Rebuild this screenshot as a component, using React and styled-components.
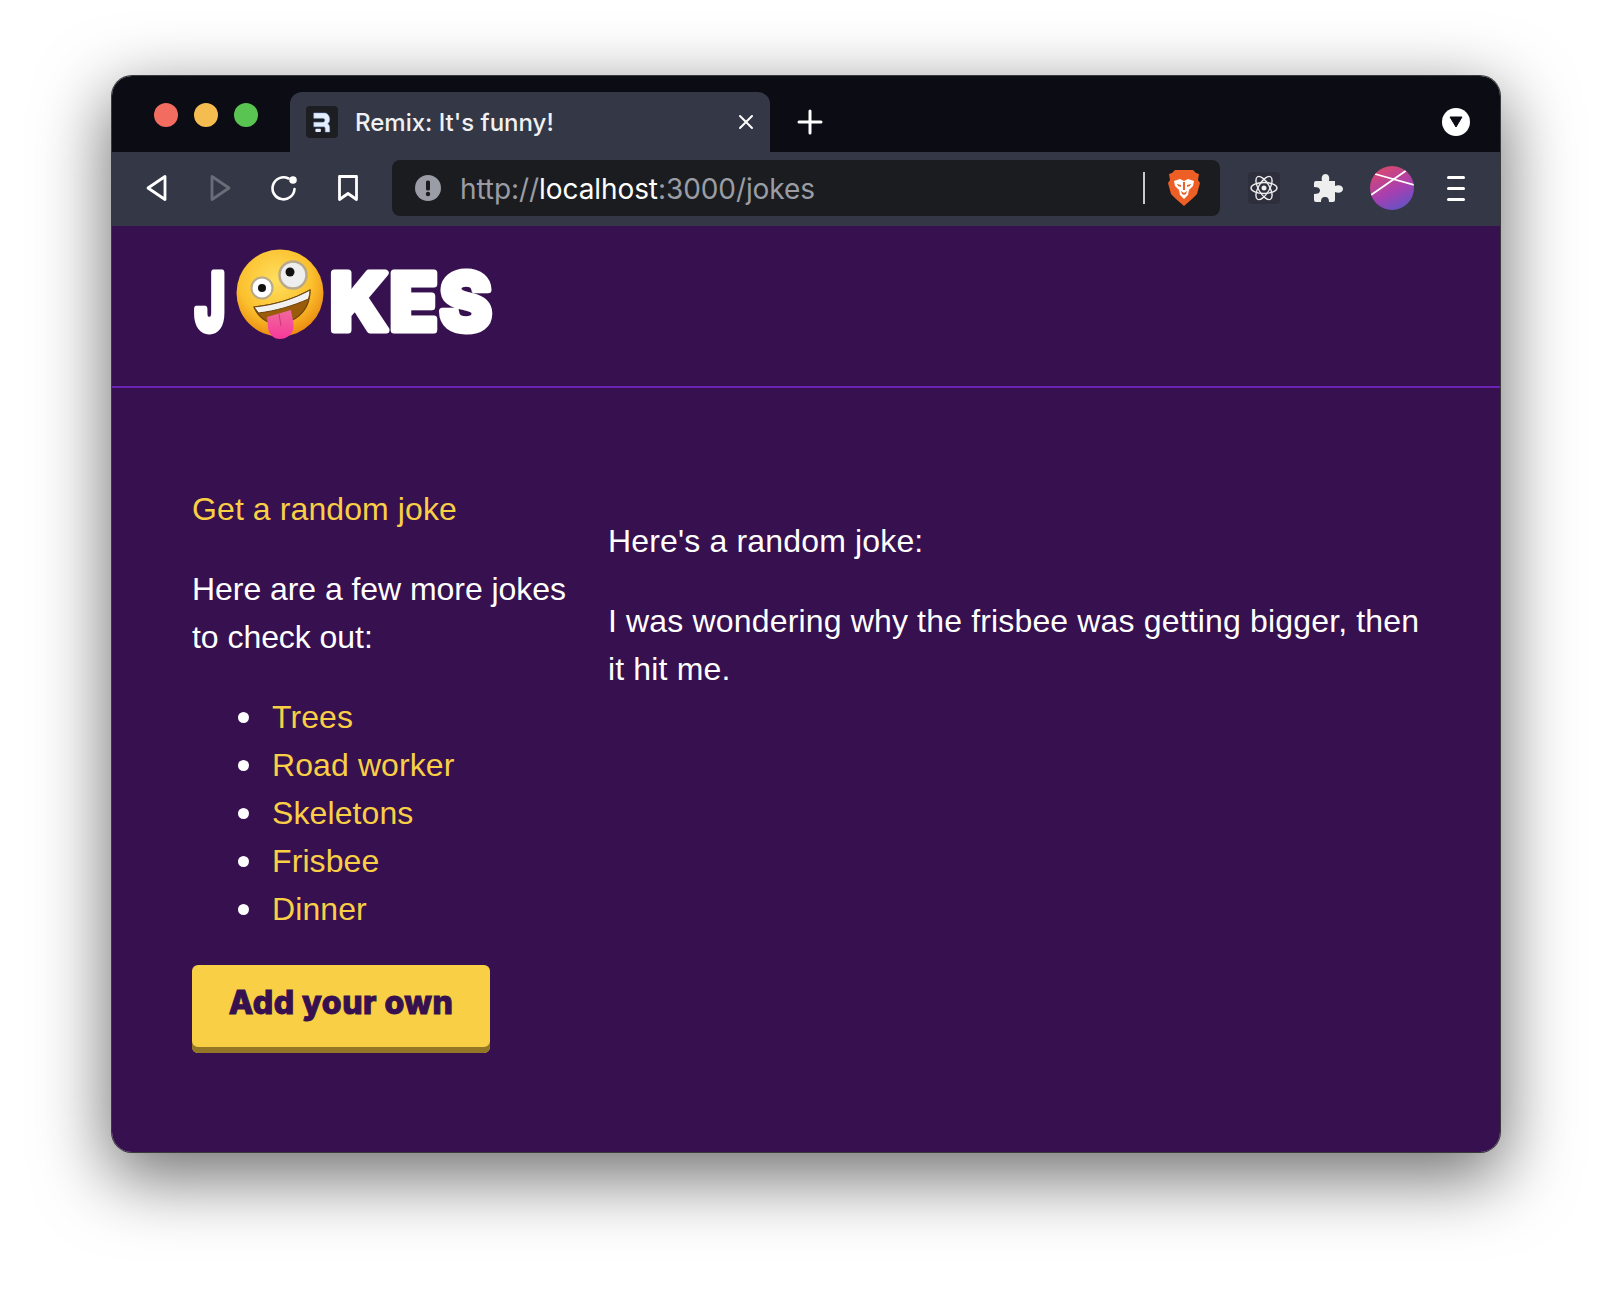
import styled, { createGlobalStyle } from "styled-components";

const jokes = ["Trees", "Road worker", "Skeletons", "Frisbee", "Dinner"];

const App = () => {
  return (
    <>
      <Global />
      <Window>
        <TitleBar>
          <Lights>
            <Light color="#f26d60" />
            <Light color="#f5bd4f" />
            <Light color="#5ac452" />
          </Lights>
          <Tab>
            <Favicon>
              <svg width="19" height="21" viewBox="0 0 24 20" preserveAspectRatio="none">
                <path d="M1 1h14a6 6 0 0 1 6 6c0 2-1 3.500-2.500 4.300 1.600.7 2.500 2 2.500 4V19h-5.500v-3c0-1.400-.8-2-2.200-2H1V9.800h11.500c1.500 0 2.500-.7 2.500-1.900 0-1.200-1-1.900-2.500-1.900H1z" fill="#e4eefc" stroke="#8fb8f0" strokeWidth=".6" />
                <rect x="3" y="16" width="7" height="3" rx="1" fill="#e4eefc" />
              </svg>
            </Favicon>
            <TabTitle>Remix: It's funny!</TabTitle>
            <CloseIcon width="16" height="16" viewBox="0 0 16 16">
              <path d="M2 2l12 12M14 2L2 14" stroke="#fff" strokeWidth="2" strokeLinecap="round" />
            </CloseIcon>
          </Tab>
          <PlusIcon width="26" height="26" viewBox="0 0 26 26">
            <path d="M13 2v22M2 13h22" stroke="#fff" strokeWidth="3" strokeLinecap="round" />
          </PlusIcon>
          <Dropdown>
            <svg width="14" height="12" viewBox="0 0 14 12">
              <path d="M1 1h12L7 11z" fill="#0b0c14" stroke="#0b0c14" strokeLinejoin="round" />
            </svg>
          </Dropdown>
        </TitleBar>
        <Toolbar>
          <NavIcons>
            <svg width="24" height="28" viewBox="0 0 24 28" fill="none">
              <path d="M20 2.500v23L3 14z" stroke="#fff" strokeWidth="2.800" strokeLinejoin="round" />
            </svg>
            <svg width="24" height="28" viewBox="0 0 24 28" fill="none">
              <path d="M4 2.500v23L21 14z" stroke="#6a6d78" strokeWidth="2.800" strokeLinejoin="round" />
            </svg>
            <svg width="27" height="28" viewBox="1 0 27 28" fill="none">
              <path d="M24.500 15a11 11 0 1 1-6-10.500" stroke="#fff" strokeWidth="2.600" strokeLinecap="round" />
              <circle cx="23" cy="6" r="3.800" fill="#fff" />
            </svg>
            <svg width="22" height="28" viewBox="0 0 22 28" fill="none">
              <path d="M2.500 2.500h17v23L11 19.500l-8.500 6z" stroke="#fff" strokeWidth="2.800" strokeLinejoin="round" />
            </svg>
          </NavIcons>
          <AddressBar>
            <svg width="26" height="26" viewBox="0 0 26 26">
              <circle cx="13" cy="13" r="13" fill="#9a9da5" />
              <rect x="11" y="5.500" width="4" height="10" rx="1.500" fill="#1b1c20" />
              <circle cx="13" cy="19" r="2.200" fill="#1b1c20" />
            </svg>
            <Url>
              http://<strong>localhost</strong>:3000/jokes
            </Url>
            <Separator />
            <svg width="32" height="36" viewBox="0 0 32 36">
              <path d="M7 0h18l3 3 3 1-1 6 2 3-3 11-5 5-8 7-8-7-5-5L0 13l2-3-1-6 3-1z" fill="#ee5f25" />
              <path d="M6 11l6-2 4 2 4-2 6 2-1 5-4 4-1 5-4 4-4-4-1-5-4-4z" fill="#fff" />
              <path d="M13 21l3 2 3-2-1 3-2 1-2-1zM9 14l4 1v2l-3-1zM23 14l-4 1v2l3-1zM15 12h2v8h-2z" fill="#ee5f25" />
            </svg>
          </AddressBar>
          <ToolIcons>
            <ReactBox>
              <svg width="28" height="28" viewBox="0 0 28 28" fill="none" stroke="#eee" strokeWidth="1.400">
                <ellipse cx="14" cy="14" rx="13" ry="5.500" />
                <ellipse cx="14" cy="14" rx="13" ry="5.500" transform="rotate(60 14 14)" />
                <ellipse cx="14" cy="14" rx="13" ry="5.500" transform="rotate(120 14 14)" />
                <circle cx="14" cy="14" r="2.500" fill="#eee" stroke="none" />
              </svg>
            </ReactBox>
            <svg width="29" height="28" viewBox="0 0 29 28">
              <path d="M2 7H8C7 3 8.500 0 11.500 0C14.500 0 16 3 15 7H21V12C25 10 29 12 29 15C29 18 25 20 21 18V26a2 2 0 0 1-2 2H15C15 24 13.500 23 11 23C8.500 23 7 24 7 28H2a2 2 0 0 1-2-2V20C4 20 6 19 6 16.500C6 14 4 13 0 13V9a2 2 0 0 1 2-2Z" fill="#eeeeee" />
            </svg>
            <Avatar>
              <svg width="44" height="44" viewBox="0 0 44 44" fill="none">
                <path d="M5 8l39 11M1 29L37 4" stroke="#fff" strokeWidth="1.800" />
              </svg>
            </Avatar>
            <Burger>
              <span />
              <span />
              <span />
            </Burger>
          </ToolIcons>
        </Toolbar>
        <Page>
          <Header>
            <LogoMark />
          </Header>
          <Main>
            <Sidebar>
              <JokeLink href="#">Get a random joke</JokeLink>
              <Text>Here are a few more jokes to check out:</Text>
              <List>
                {jokes.map((joke) => (
                  <li key={joke}>
                    <JokeLink href="#">{joke}</JokeLink>
                  </li>
                ))}
              </List>
              <Button>Add your own</Button>
            </Sidebar>
            <Content>
              <Text>Here's a random joke:</Text>
              <Text>I was wondering why the frisbee was getting bigger, then it hit me.</Text>
            </Content>
          </Main>
        </Page>
      </Window>
    </>
  );
};

const LogoMark = () => (
  <LogoSvg width="310" height="100" viewBox="0 0 310 100">
    <defs>
      <radialGradient id="face" cx="45%" cy="35%" r="65%">
        <stop offset="0%" stopColor="#ffdf5e" />
        <stop offset="65%" stopColor="#fbc02d" />
        <stop offset="100%" stopColor="#ec8d12" />
      </radialGradient>
      <linearGradient id="tongue" x1="0" y1="0" x2="0" y2="1">
        <stop offset="0%" stopColor="#f06a9c" />
        <stop offset="100%" stopColor="#f7389a" />
      </linearGradient>
    </defs>
    <LogoLetters x="3" y="87.500" textLength="30" lengthAdjust="spacingAndGlyphs">J</LogoLetters>
    <svg x="42" y="7" width="92" height="92" viewBox="0 0 92 92">
      <circle cx="46" cy="44" r="43.500" fill="url(#face)" />
      <path d="M20 58c20-2 40-8 56-17 0 12-5 22-14 28-6 4-12 6-18 6-11 0-20-7-24-17z" fill="#9a5b0a" stroke="#6f430c" strokeWidth="1.200" />
      <path d="M20 58c20-2 40-8 56-17 0 3-.5 6-1.500 9-16 7-33 12-50 14z" fill="#f1f1f1" stroke="#6f430c" strokeWidth="1" />
      <path d="M33 68l24-7c1 8 4 14 2 20-2 6-8 9-13 9-7 0-11-5-12-11z" fill="url(#tongue)" />
      <path d="M45 65l2 12" stroke="#c73a77" strokeWidth="1" />
      <circle cx="28" cy="39" r="10.500" fill="#fff" stroke="#b7a98a" strokeWidth="2" />
      <circle cx="28" cy="39" r="4" fill="#111" />
      <circle cx="59" cy="26" r="13.500" fill="#eee" stroke="#b7a98a" strokeWidth="2.500" />
      <circle cx="56" cy="23" r="4.500" fill="#111" />
    </svg>
    <LogoLetters x="138" y="87.500" letterSpacing="2">KES</LogoLetters>
  </LogoSvg>
);

const Global = createGlobalStyle`
  html, body {
    margin: 0;
    background: #fff;
  }
  body {
    font-family: "Liberation Sans", Arial, sans-serif;
  }
`;

const Window = styled.div`
  width: 1388px;
  height: 1076px;
  margin: 76px 0 148px 112px;
  border-radius: 20px;
  overflow: hidden;
  display: flex;
  flex-direction: column;
  box-shadow: 0 0 0 1px #3a3a3e, 0 22px 70px 4px rgba(0, 0, 0, 0.56);
`;

const TitleBar = styled.div`
  height: 76px;
  flex: none;
  background: #0b0c14;
  display: flex;
  align-items: flex-end;
  padding: 0 30px 0 42px;
  box-sizing: border-box;
`;

const Lights = styled.div`
  display: flex;
  gap: 16px;
  align-self: flex-start;
  margin-top: 27px;
  margin-right: 32px;
`;

const Light = styled.span`
  width: 24px;
  height: 24px;
  border-radius: 50%;
  background: ${(props) => props.color};
`;

const Tab = styled.div`
  width: 480px;
  height: 60px;
  background: #343846;
  border-radius: 12px 12px 0 0;
  display: flex;
  align-items: center;
  padding: 0 16px;
  box-sizing: border-box;
`;

const Favicon = styled.div`
  width: 32px;
  height: 32px;
  border-radius: 4px;
  background: #1d1e22;
  display: flex;
  align-items: center;
  justify-content: center;
  margin-right: 17px;
`;

const TabTitle = styled.span`
  font-family: Inter, sans-serif;
  font-size: 24px;
  font-weight: 500;
  color: #f1f1f3;
  flex: 1;
`;

const CloseIcon = styled.svg`
  flex: none;
`;

const PlusIcon = styled.svg`
  margin: 0 0 17px 27px;
`;

const Dropdown = styled.div`
  width: 28px;
  height: 28px;
  border-radius: 50%;
  background: #fff;
  margin: 0 0 16px auto;
  display: flex;
  align-items: center;
  justify-content: center;
`;

const Toolbar = styled.div`
  height: 74px;
  flex: none;
  background: #343846;
  display: flex;
  align-items: center;
  padding: 0 0 2px 33px;
  box-sizing: border-box;
`;

const NavIcons = styled.div`
  display: flex;
  align-items: center;
  gap: 39px;
  margin-right: 33px;
`;

const AddressBar = styled.div`
  width: 828px;
  height: 56px;
  background: #1b1c20;
  border-radius: 8px;
  display: flex;
  align-items: center;
  padding: 0 20px 0 23px;
  box-sizing: border-box;
`;

const Url = styled.span`
  font-family: Inter, sans-serif;
  font-size: 28px;
  letter-spacing: -0.08px;
  color: #9a9da5;
  margin-left: 19px;
  padding-top: 2px;
  flex: 1;

  strong {
    font-weight: 400;
    color: #fff;
  }
`;

const Separator = styled.span`
  width: 2px;
  height: 32px;
  background: #c9c9cc;
  margin-right: 23px;
`;

const ToolIcons = styled.div`
  display: grid;
  grid-template-columns: repeat(4, 64px);
  justify-items: center;
  align-items: center;
  padding-left: 12px;
`;

const ReactBox = styled.div`
  width: 32px;
  height: 32px;
  border-radius: 4px;
  background: #2d303c;
  display: flex;
  align-items: center;
  justify-content: center;
`;

const Avatar = styled.div`
  width: 44px;
  height: 44px;
  border-radius: 50%;
  overflow: hidden;
  background: linear-gradient(155deg, #d8486f 10%, #a83fb0 55%, #5a55c8 95%);
`;

const Burger = styled.div`
  width: 18px;
  display: flex;
  flex-direction: column;
  gap: 8px;

  span {
    height: 3px;
    border-radius: 2px;
    background: #fff;
  }
`;

const Page = styled.div`
  flex: 1;
  background: #36104f;
  display: flex;
  flex-direction: column;
`;

const Header = styled.div`
  height: 162px;
  flex: none;
  box-sizing: border-box;
  border-bottom: 2px solid #6c22b5;
  padding: 16px 80px 0;
`;

const LogoSvg = styled.svg`
  display: block;
  overflow: visible;
`;

const LogoLetters = styled.text`
  font-family: Inter, sans-serif;
  font-weight: 800;
  font-size: 78.4px;
  fill: #fff;
  stroke: #fff;
  stroke-width: 7px;
  stroke-linejoin: round;
`;

const Main = styled.div`
  display: flex;
  gap: 32px;
  padding: 97px 80px 0;
`;

const Sidebar = styled.div`
  width: 384px;
  flex: none;
  display: flex;
  flex-direction: column;
  align-items: flex-start;

  p {
    letter-spacing: -0.05px;
  }
`;

const Content = styled.div`
  flex: 1;

  p {
    letter-spacing: 0.16px;
  }
`;

const JokeLink = styled.a`
  font-size: 32px;
  line-height: 48px;
  letter-spacing: 0.1px;
  color: #f9cf45;
  text-decoration: none;
`;

const Text = styled.p`
  font-size: 32px;
  line-height: 48px;
  color: #fff;
  margin: 32px 0;
`;

const List = styled.ul`
  margin: 0 0 32px;
  padding: 0 0 0 46px;
  list-style: none;

  li {
    display: flex;
    align-items: center;
    gap: 23px;
  }

  li::before {
    content: "";
    width: 11px;
    height: 11px;
    border-radius: 50%;
    background: #fff;
  }
`;

const Button = styled.button`
  width: 298px;
  height: 88px;
  border: none;
  border-radius: 6px;
  background: #f9cf45;
  box-shadow: inset 0 -6px 0 #947726;
  color: #36104f;
  font-family: Inter, sans-serif;
  font-size: 32px;
  font-weight: 800;
  letter-spacing: 0.5px;
  -webkit-text-stroke: 1px #36104f;
  padding: 0 0 14px;
`;

export default App;
